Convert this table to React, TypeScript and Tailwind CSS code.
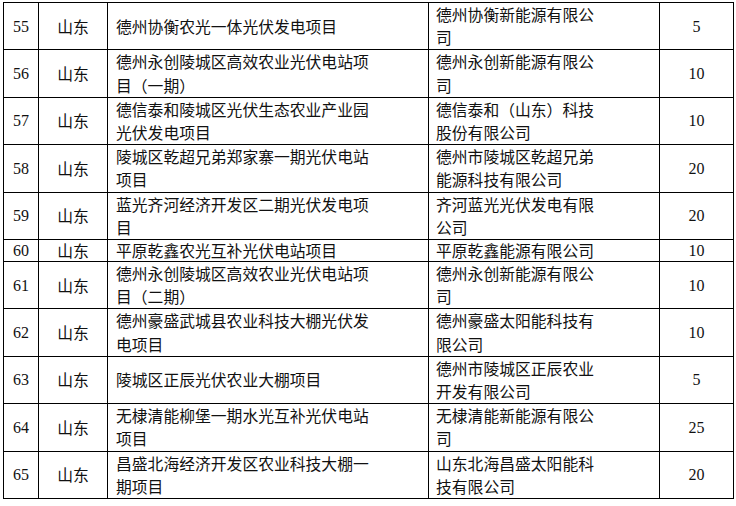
import React from 'react';

type Row = {
  no: number;
  province: string;
  name: string;
  company: string;
  capacity: number;
  short?: boolean;
};

const rows: Row[] = [
  { no: 55, province: '山东', name: '德州协衡农光一体光伏发电项目', company: '德州协衡新能源有限公司', capacity: 5 },
  { no: 56, province: '山东', name: '德州永创陵城区高效农业光伏电站项目（一期）', company: '德州永创新能源有限公司', capacity: 10 },
  { no: 57, province: '山东', name: '德信泰和陵城区光伏生态农业产业园光伏发电项目', company: '德信泰和（山东）科技股份有限公司', capacity: 10 },
  { no: 58, province: '山东', name: '陵城区乾超兄弟郑家寨一期光伏电站项目', company: '德州市陵城区乾超兄弟能源科技有限公司', capacity: 20 },
  { no: 59, province: '山东', name: '蓝光齐河经济开发区二期光伏发电项目', company: '齐河蓝光光伏发电有限公司', capacity: 20 },
  { no: 60, province: '山东', name: '平原乾鑫农光互补光伏电站项目', company: '平原乾鑫能源有限公司', capacity: 10, short: true },
  { no: 61, province: '山东', name: '德州永创陵城区高效农业光伏电站项目（二期）', company: '德州永创新能源有限公司', capacity: 10 },
  { no: 62, province: '山东', name: '德州豪盛武城县农业科技大棚光伏发电项目', company: '德州豪盛太阳能科技有限公司', capacity: 10 },
  { no: 63, province: '山东', name: '陵城区正辰光伏农业大棚项目', company: '德州市陵城区正辰农业开发有限公司', capacity: 5 },
  { no: 64, province: '山东', name: '无棣清能柳堡一期水光互补光伏电站项目', company: '无棣清能新能源有限公司', capacity: 25 },
  { no: 65, province: '山东', name: '昌盛北海经济开发区农业科技大棚一期项目', company: '山东北海昌盛太阳能科技有限公司', capacity: 20 },
];

const cjk = "font-['Noto_Sans_CJK_SC','Noto_Sans',sans-serif]";
const serif = "font-['Liberation_Serif','Times_New_Roman',serif]";

const App: React.FC = () => {
  return (
    <div className="w-[736px] h-[506px] bg-white overflow-hidden pt-[2px] pl-[3px] text-[#111]">
      <table className="table-fixed border-collapse w-[730px]">
        <colgroup>
          <col className="w-[35px]" />
          <col className="w-[69px]" />
          <col className="w-[321px]" />
          <col className="w-[231px]" />
          <col className="w-[74px]" />
        </colgroup>
        <tbody>
          {rows.map((r) => (
            <tr
              key={r.no}
              className={r.short ? 'leading-[21px]' : 'leading-[23.2px]'}
            >
              <td className={`border border-black text-center align-middle p-0 text-[16px] ${serif}`}>
                {r.no}
              </td>
              <td className={`border border-black text-center align-middle p-0 text-[15.8px] ${cjk}`}>
                {r.province}
              </td>
              <td className={`border border-black align-middle p-0 pl-[8px] text-[15.8px] ${cjk}`}>
                <div className="w-[262px]">{r.name}</div>
              </td>
              <td className={`border border-black align-middle p-0 pl-[7px] text-[15.8px] ${cjk}`}>
                <div className="w-[166px]">{r.company}</div>
              </td>
              <td className={`border border-black text-center align-middle p-0 text-[16px] ${serif}`}>
                {r.capacity}
              </td>
            </tr>
          ))}
        </tbody>
      </table>
    </div>
  );
};

export default App;
